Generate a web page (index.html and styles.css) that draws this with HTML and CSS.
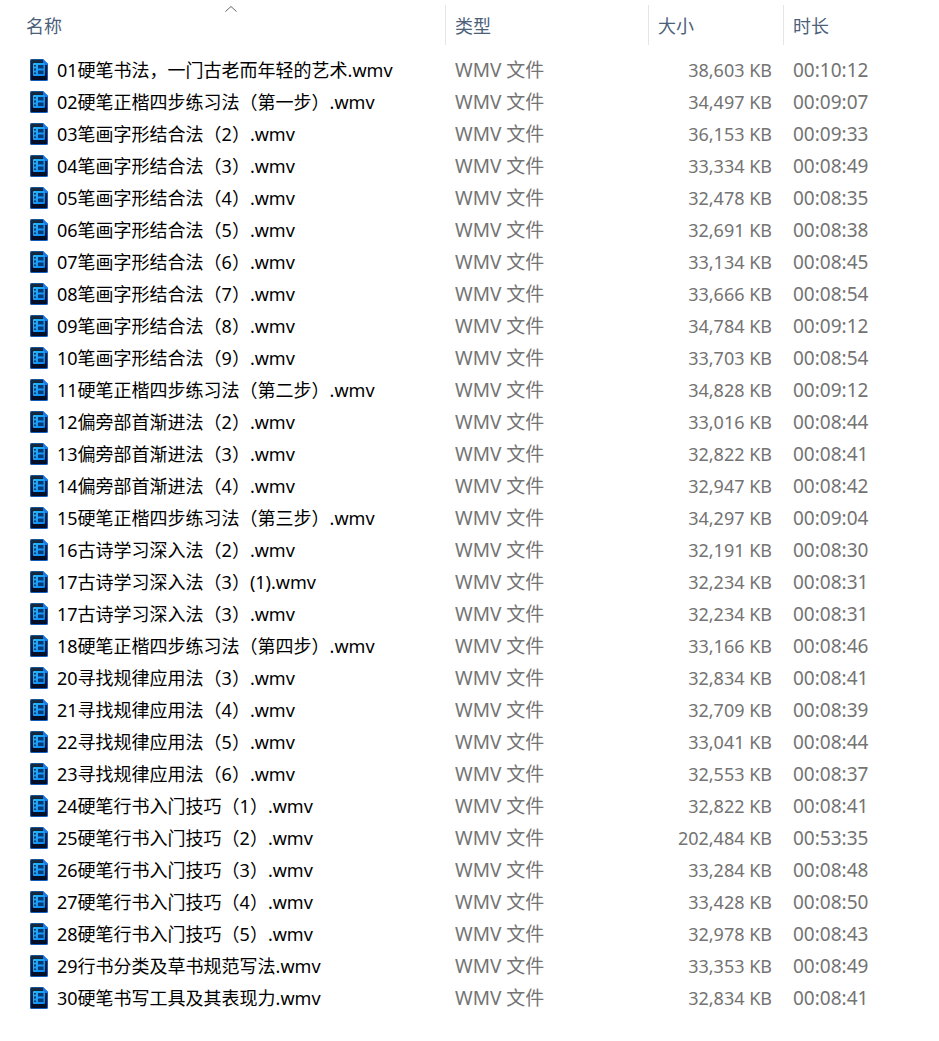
FILE: index.html
```html
<!DOCTYPE html>
<html lang="zh-CN">
<head>
    <meta charset="UTF-8">
    <meta name="viewport" content="width=device-width, initial-scale=1.0">
    <title>硬笔书法</title>
    <link rel="stylesheet" href="styles.css">
</head>
<body>
<svg class="defs" width="0" height="0" aria-hidden="true">
    <linearGradient id="edge" x1="0" y1="0" x2="1" y2="1">
        <stop offset="0" stop-color="#164f8c"/>
        <stop offset="1" stop-color="#0f62cc"/>
    </linearGradient>
    <linearGradient id="page" x1="0" y1="0" x2="0" y2="1">
        <stop offset="0" stop-color="#182b40"/>
        <stop offset="1" stop-color="#020b24"/>
    </linearGradient>
    <linearGradient id="film" x1="0" y1="0" x2="1" y2="1">
        <stop offset="0" stop-color="#2cb8fa"/>
        <stop offset="1" stop-color="#0a84f4"/>
    </linearGradient>
    <symbol id="video" viewBox="0 0 18 22">
        <path d="M1.5 0H13L18 5V20.5Q18 22 16.5 22H1.5Q0 22 0 20.5V1.5Q0 0 1.5 0Z" fill="url(#edge)"/>
        <path d="M1.8 1H12.5L17 5.5V20.2Q17 21 16.2 21H1.8Q1 21 1 20.2V1.8Q1 1 1.8 1Z" fill="url(#page)"/>
        <path d="M13 0L18 5V6H14Q13 6 13 5Z" fill="#1676e8"/>
        <path d="M4 4H14Q15 4 15 5V16Q15 17 14 17H4Q3 17 3 16V5Q3 4 4 4Z" fill="url(#film)"/>
        <path d="M4 6H6V7.5H4ZM4 9.5H6V11.5H4ZM4 13.5H6V15H4ZM8 6H13.5V9.5H8ZM8 11.5H13.5V15H8Z" fill="#0a3a74"/>
    </symbol>
</svg>
<table class="files">
    <colgroup>
        <col class="col-name">
        <col class="col-type">
        <col class="col-size">
        <col class="col-time">
    </colgroup>
    <thead>
        <tr>
            <th aria-sort="ascending"><button>名称</button><svg class="sort" viewBox="0 0 12 6" aria-hidden="true"><path d="M0.5 5.5L6 0.5L11.5 5.5"/></svg></th>
            <th><button>类型</button></th>
            <th><button>大小</button></th>
            <th><button>时长</button></th>
        </tr>
    </thead>
    <tbody>
        <tr><td><svg class="icon"><use href="#video"/></svg>01硬笔书法，一门古老而年轻的艺术.wmv</td><td>WMV 文件</td><td>38,603 KB</td><td>00:10:12</td></tr>
        <tr><td><svg class="icon"><use href="#video"/></svg>02硬笔正楷四步练习法（第一步）.wmv</td><td>WMV 文件</td><td>34,497 KB</td><td>00:09:07</td></tr>
        <tr><td><svg class="icon"><use href="#video"/></svg>03笔画字形结合法（2）.wmv</td><td>WMV 文件</td><td>36,153 KB</td><td>00:09:33</td></tr>
        <tr><td><svg class="icon"><use href="#video"/></svg>04笔画字形结合法（3）.wmv</td><td>WMV 文件</td><td>33,334 KB</td><td>00:08:49</td></tr>
        <tr><td><svg class="icon"><use href="#video"/></svg>05笔画字形结合法（4）.wmv</td><td>WMV 文件</td><td>32,478 KB</td><td>00:08:35</td></tr>
        <tr><td><svg class="icon"><use href="#video"/></svg>06笔画字形结合法（5）.wmv</td><td>WMV 文件</td><td>32,691 KB</td><td>00:08:38</td></tr>
        <tr><td><svg class="icon"><use href="#video"/></svg>07笔画字形结合法（6）.wmv</td><td>WMV 文件</td><td>33,134 KB</td><td>00:08:45</td></tr>
        <tr><td><svg class="icon"><use href="#video"/></svg>08笔画字形结合法（7）.wmv</td><td>WMV 文件</td><td>33,666 KB</td><td>00:08:54</td></tr>
        <tr><td><svg class="icon"><use href="#video"/></svg>09笔画字形结合法（8）.wmv</td><td>WMV 文件</td><td>34,784 KB</td><td>00:09:12</td></tr>
        <tr><td><svg class="icon"><use href="#video"/></svg>10笔画字形结合法（9）.wmv</td><td>WMV 文件</td><td>33,703 KB</td><td>00:08:54</td></tr>
        <tr><td><svg class="icon"><use href="#video"/></svg>11硬笔正楷四步练习法（第二步）.wmv</td><td>WMV 文件</td><td>34,828 KB</td><td>00:09:12</td></tr>
        <tr><td><svg class="icon"><use href="#video"/></svg>12偏旁部首渐进法（2）.wmv</td><td>WMV 文件</td><td>33,016 KB</td><td>00:08:44</td></tr>
        <tr><td><svg class="icon"><use href="#video"/></svg>13偏旁部首渐进法（3）.wmv</td><td>WMV 文件</td><td>32,822 KB</td><td>00:08:41</td></tr>
        <tr><td><svg class="icon"><use href="#video"/></svg>14偏旁部首渐进法（4）.wmv</td><td>WMV 文件</td><td>32,947 KB</td><td>00:08:42</td></tr>
        <tr><td><svg class="icon"><use href="#video"/></svg>15硬笔正楷四步练习法（第三步）.wmv</td><td>WMV 文件</td><td>34,297 KB</td><td>00:09:04</td></tr>
        <tr><td><svg class="icon"><use href="#video"/></svg>16古诗学习深入法（2）.wmv</td><td>WMV 文件</td><td>32,191 KB</td><td>00:08:30</td></tr>
        <tr><td><svg class="icon"><use href="#video"/></svg>17古诗学习深入法（3）(1).wmv</td><td>WMV 文件</td><td>32,234 KB</td><td>00:08:31</td></tr>
        <tr><td><svg class="icon"><use href="#video"/></svg>17古诗学习深入法（3）.wmv</td><td>WMV 文件</td><td>32,234 KB</td><td>00:08:31</td></tr>
        <tr><td><svg class="icon"><use href="#video"/></svg>18硬笔正楷四步练习法（第四步）.wmv</td><td>WMV 文件</td><td>33,166 KB</td><td>00:08:46</td></tr>
        <tr><td><svg class="icon"><use href="#video"/></svg>20寻找规律应用法（3）.wmv</td><td>WMV 文件</td><td>32,834 KB</td><td>00:08:41</td></tr>
        <tr><td><svg class="icon"><use href="#video"/></svg>21寻找规律应用法（4）.wmv</td><td>WMV 文件</td><td>32,709 KB</td><td>00:08:39</td></tr>
        <tr><td><svg class="icon"><use href="#video"/></svg>22寻找规律应用法（5）.wmv</td><td>WMV 文件</td><td>33,041 KB</td><td>00:08:44</td></tr>
        <tr><td><svg class="icon"><use href="#video"/></svg>23寻找规律应用法（6）.wmv</td><td>WMV 文件</td><td>32,553 KB</td><td>00:08:37</td></tr>
        <tr><td><svg class="icon"><use href="#video"/></svg>24硬笔行书入门技巧（1）.wmv</td><td>WMV 文件</td><td>32,822 KB</td><td>00:08:41</td></tr>
        <tr><td><svg class="icon"><use href="#video"/></svg>25硬笔行书入门技巧（2）.wmv</td><td>WMV 文件</td><td>202,484 KB</td><td>00:53:35</td></tr>
        <tr><td><svg class="icon"><use href="#video"/></svg>26硬笔行书入门技巧（3）.wmv</td><td>WMV 文件</td><td>33,284 KB</td><td>00:08:48</td></tr>
        <tr><td><svg class="icon"><use href="#video"/></svg>27硬笔行书入门技巧（4）.wmv</td><td>WMV 文件</td><td>33,428 KB</td><td>00:08:50</td></tr>
        <tr><td><svg class="icon"><use href="#video"/></svg>28硬笔行书入门技巧（5）.wmv</td><td>WMV 文件</td><td>32,978 KB</td><td>00:08:43</td></tr>
        <tr><td><svg class="icon"><use href="#video"/></svg>29行书分类及草书规范写法.wmv</td><td>WMV 文件</td><td>33,353 KB</td><td>00:08:49</td></tr>
        <tr><td><svg class="icon"><use href="#video"/></svg>30硬笔书写工具及其表现力.wmv</td><td>WMV 文件</td><td>32,834 KB</td><td>00:08:41</td></tr>
    </tbody>
</table>
</body>
</html>
```
FILE: styles.css
```css
*{
    margin:0;
    padding:0;
    box-sizing:border-box;
}
body{
    background-color:#fff;
    color:#000;
    font-family:"Noto Sans","Noto Sans CJK SC",sans-serif;
    font-size:18px;
}
.defs{
    position:absolute;
}
.files{
    width:100%;
    table-layout:fixed;
    border-collapse:collapse;
}
.col-type{
    width:203px;
}
.col-size{
    width:135px;
}
.col-time{
    width:155px;
}
.files th{
    position:relative;
    padding:5px 0 9px;
    font-weight:normal;
}
.files th button{
    display:block;
    width:100%;
    height:40px;
    padding-left:9px;
    border:none;
    border-right:1px solid #e5e5e5;
    background:none;
    color:#4c607a;
    font:inherit;
    text-align:left;
}
.files th:first-child button{
    padding-left:26px;
}
.files th:last-child button{
    border-right:none;
}
.sort{
    position:absolute;
    top:6px;
    left:calc(50% + 2px);
    width:12px;
    height:6px;
    fill:none;
    stroke:#666;
}
.files td{
    height:32px;
    padding-left:9px;
    color:#737373;
    line-height:32px;
    white-space:nowrap;
}
.files td:first-child{
    padding-left:30px;
    color:#000;
}
.files td:nth-child(2),
.files td:nth-child(4){
    font-size:19px;
}
.files td:nth-child(3){
    padding-right:12px;
    text-align:right;
}
.icon{
    width:18px;
    height:22px;
    margin:0 9px 4px 0;
    vertical-align:middle;
}
.files tbody tr:hover{
    background-color:#e5f3ff;
}
```
